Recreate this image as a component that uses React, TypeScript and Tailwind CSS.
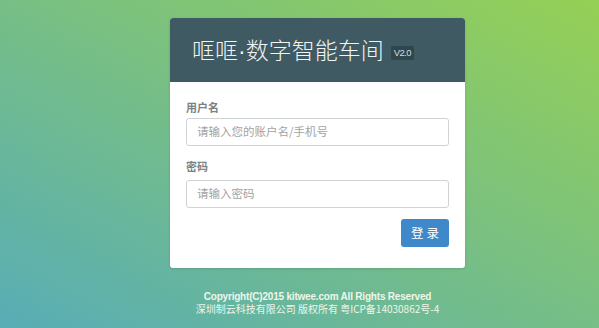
import React from "react";

export default function App() {
  return (
    <div
      className="w-full h-[328px] overflow-hidden bg-[linear-gradient(to_top_right,#58adb6,#95d055)] flex flex-col items-center pl-[36px] pt-[18px]"
      style={{ fontFamily: '"Liberation Sans", Arial, "Noto Sans CJK SC", sans-serif' }}
    >
      <div className="w-[295px] rounded-[3px] overflow-hidden bg-white shadow-[0_1px_3px_rgba(0,0,0,0.12)]">
        <div className="h-[64px] bg-[#3f5a62] flex items-center pl-[22px]">
          <span
            className="text-[23px] text-[#f2f4f4] leading-none"
            style={{ fontFamily: '"Noto Sans CJK SC", sans-serif', fontWeight: 300 }}
          >
            哐哐<span style={{ fontFamily: '"Liberation Sans", sans-serif' }}>·</span>数字智能车间
          </span>
          <span className="ml-[7px] mt-[6px] px-[3px] h-[14px] flex items-center rounded-[2px] bg-[#2f464d] text-[#d5dcdd] text-[9.5px] leading-none tracking-[-0.6px]">
            V2.0
          </span>
        </div>
        <div className="px-[16px] pt-[17px] pb-[21px]" style={{ fontFamily: '"Noto Sans CJK SC", sans-serif' }}>
          <div className="text-[11px] leading-[16px] font-bold text-[#7b8284] mb-[3px]">用户名</div>
          <div className="h-[28px] rounded-[3px] border border-[#cfd3d4] flex items-center pl-[10px] text-[11.5px] text-[#a0a4a6]">
            请输入您的账户名/手机号
          </div>
          <div className="text-[11px] leading-[16px] font-bold text-[#7b8284] mt-[12px] mb-[6px]">密码</div>
          <div className="h-[28px] rounded-[3px] border border-[#cfd3d4] flex items-center pl-[10px] text-[11.5px] text-[#a0a4a6]">
            请输入密码
          </div>
          <div className="flex justify-end mt-[11px]">
            <div className="w-[48px] h-[28px] rounded-[3px] bg-[#3f88c9] text-white text-[12.5px] flex items-center justify-center tracking-[3px] pl-[3px]">
              登录
            </div>
          </div>
        </div>
      </div>
      <div className="mt-[23px] text-center text-[10px] leading-[11.5px] font-bold text-[#eef6ea]">
        <div className="tracking-[-0.2px]">Copyright(C)2015 kitwee.com All Rights Reserved</div>
        <div className="font-normal" style={{ fontFamily: '"Noto Sans CJK SC", sans-serif' }}>
          深圳制云科技有限公司 版权所有 粤ICP备14030862号-4
        </div>
      </div>
    </div>
  );
}
